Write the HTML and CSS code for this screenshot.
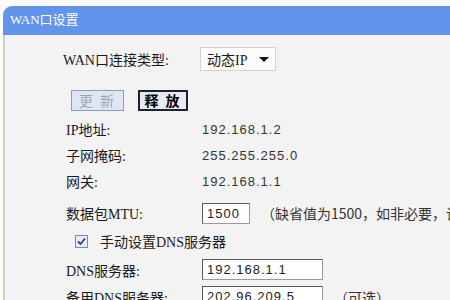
FILE: index.html
```html
<!DOCTYPE html>
<html lang="zh-CN">
<head>
    <meta charset="UTF-8">
    <title>WAN口设置</title>
    <link rel="stylesheet" href="styles.css">
</head>
<body>
    <div class="panel">
        <div class="panel-title">WAN口设置</div>
        <div class="panel-body">
            <div class="row row-type">
                <span class="label">WAN口连接类型:</span>
                <div class="select">
                    <span>动态IP</span>
                    <span class="arrow"></span>
                </div>
            </div>

            <div class="actions">
                <button class="btn btn-disabled">更 新</button>
                <button class="btn btn-release">释 放</button>
            </div>

            <div class="row">
                <span class="label">IP地址:</span>
                <span class="value">192.168.1.2</span>
            </div>
            <div class="row">
                <span class="label">子网掩码:</span>
                <span class="value">255.255.255.0</span>
            </div>
            <div class="row">
                <span class="label">网关:</span>
                <span class="value">192.168.1.1</span>
            </div>

            <div class="row row-mtu">
                <span class="label">数据包MTU:</span>
                <div class="field">
                    <span class="input input-short">1500</span>
                    <span class="hint">（缺省值为1500，如非必要，请勿修改）</span>
                </div>
            </div>

            <div class="check-row">
                <span class="checkbox">
                    <svg width="9" height="9" viewBox="0 0 9 9">
                        <path d="M1 4.5 L3.5 7 L8 1.5" fill="none" stroke="#2a3f8a" stroke-width="1.8"/>
                    </svg>
                </span>
                <span class="check-label">手动设置DNS服务器</span>
            </div>

            <div class="row row-input">
                <span class="label">DNS服务器:</span>
                <span class="input">192.168.1.1</span>
            </div>
            <div class="row row-input">
                <span class="label">备用DNS服务器:</span>
                <div class="field">
                    <span class="input">202.96.209.5</span>
                    <span class="hint">（可选）</span>
                </div>
            </div>
        </div>
    </div>
</body>
</html>
```

FILE: styles.css
```css
* {
    margin: 0;
    padding: 0;
    box-sizing: border-box;
}

body {
    background: #fbfcfb;
    font-family: "Liberation Serif", "Noto Sans CJK SC", serif;
    font-size: 14px;
    color: #1a1a1a;
    overflow: hidden;
    width: 450px;
    height: 300px;
}

.panel {
    margin: 6px 0 0 3px;
}

.panel-title {
    height: 29px;
    line-height: 28px;
    padding-left: 7px;
    background: #6394ec;
    color: #ffffff;
    border-radius: 9px 0 0 0;
    font-size: 13px;
}

.panel-body {
    background: #f3f3f3;
    border-left: 2px solid #d6cfbd;
    padding: 12px 0 0 61px;
    height: 270px;
    white-space: nowrap;
    overflow: hidden;
}

.row {
    display: flex;
    align-items: center;
    height: 26px;
}

.label {
    width: 136px;
    flex-shrink: 0;
}

.value {
    font-family: "Liberation Sans", sans-serif;
    font-size: 13px;
    color: #333;
    letter-spacing: 1px;
}

/* connection type */
.row-type {
    height: 24px;
    margin-left: -3px;
}

.row-type .label {
    width: 137px;
}

.select {
    display: flex;
    align-items: center;
    justify-content: space-between;
    width: 76px;
    height: 24px;
    padding: 0 6px 0 6px;
    background: #fbfbfb;
    border: 1px solid #d2d2d2;
}

.arrow {
    width: 0;
    height: 0;
    border-left: 5px solid transparent;
    border-right: 5px solid transparent;
    border-top: 5px solid #111;
}

/* buttons */
.actions {
    display: flex;
    gap: 14px;
    margin: 19px 0 5px 5px;
}

.btn {
    height: 21px;
    font-family: "Noto Sans CJK SC", sans-serif;
    font-size: 14px;
    line-height: 17px;
    letter-spacing: 2px;
}

.btn-disabled {
    width: 53px;
    background: #dfe5f2;
    color: #a2a6b2;
    border: 1px solid #8c9cbd;
}

.btn-release {
    width: 50px;
    background: #e6eaf4;
    color: #000;
    border: 2px solid #1c2233;
    font-weight: bold;
}

/* mtu */
.row-mtu {
    margin-top: 6px;
}

.field {
    display: flex;
    align-items: center;
}

.input {
    display: flex;
    align-items: center;
    width: 121px;
    height: 21px;
    padding-left: 4px;
    background: #ffffff;
    border: 1px solid #5a5a5a;
    border-right-color: #9a9a9a;
    border-bottom-color: #9a9a9a;
    font-family: "Liberation Sans", sans-serif;
    font-size: 13px;
    letter-spacing: 1px;
    color: #222;
}

.input-short {
    width: 48px;
}

.hint {
    margin-left: 11px;
    font-family: "Noto Sans CJK SC", sans-serif;
    font-size: 14px;
    color: #333;
}

/* dns checkbox */
.check-row {
    display: flex;
    align-items: center;
    height: 30px;
    margin-left: 9px;
}

.checkbox {
    display: flex;
    align-items: center;
    justify-content: center;
    width: 13px;
    height: 13px;
    background: #e8ecf6;
    border: 1px solid #7f8aa6;
}

.check-label {
    margin-left: 12px;
}

.row-input {
    height: 27px;
}
```
